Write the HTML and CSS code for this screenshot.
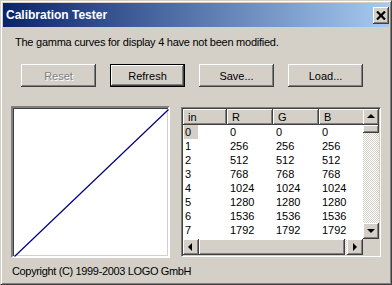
FILE: index.html
```
<!doctype html>
<html lang="en">
<head>
	<meta charset="UTF-8">
	<title>Calibration Tester</title>
	<link rel="stylesheet" href="styles.css">
</head>
<body>
	<div class="window">
		<div class="titlebar">
			<span class="title">Calibration Tester</span>
			<span class="close">
				<svg width="10" height="9" viewBox="0 0 10 9"><path d="M1 0.5 L9 8.5 M9 0.5 L1 8.5" stroke="#000" stroke-width="2.2"/></svg>
			</span>
		</div>
		<div class="content">
			<p class="msg">The gamma curves for display 4 have not been modified.</p>
			<div class="buttons">
				<button class="btn" disabled>Reset</button>
				<button class="btn btn_default">Refresh</button>
				<button class="btn">Save...</button>
				<button class="btn">Load...</button>
			</div>
			<div class="main">
				<div class="graph">
					<svg width="155" height="148" viewBox="0 0 155 148"><line x1="0.5" y1="147.5" x2="154.5" y2="0.5" stroke="#000080" stroke-width="1.2"/></svg>
				</div>
				<div class="grid">
					<div class="cells">
						<table>
							<colgroup><col class="c_in"><col class="c_val"><col class="c_val"><col class="c_val"></colgroup>
							<thead>
								<tr><th>in</th><th>R</th><th>G</th><th>B</th></tr>
							</thead>
							<tbody>
								<tr><td><span class="focus">0</span></td><td>0</td><td>0</td><td>0</td></tr>
								<tr><td>1</td><td>256</td><td>256</td><td>256</td></tr>
								<tr><td>2</td><td>512</td><td>512</td><td>512</td></tr>
								<tr><td>3</td><td>768</td><td>768</td><td>768</td></tr>
								<tr><td>4</td><td>1024</td><td>1024</td><td>1024</td></tr>
								<tr><td>5</td><td>1280</td><td>1280</td><td>1280</td></tr>
								<tr><td>6</td><td>1536</td><td>1536</td><td>1536</td></tr>
								<tr><td>7</td><td>1792</td><td>1792</td><td>1792</td></tr>
							</tbody>
						</table>
					</div>
					<div class="vscroll">
						<div class="sbtn arrow_up"></div>
						<div class="thumb v_thumb"></div>
						<div class="track"></div>
						<div class="sbtn arrow_down"></div>
					</div>
					<div class="hscroll">
						<div class="sbtn arrow_left"></div>
						<div class="thumb h_thumb"></div>
						<div class="track"></div>
						<div class="sbtn arrow_right"></div>
					</div>
					<div class="corner"></div>
				</div>
			</div>
			<p class="copyright">Copyright (C) 1999-2003 LOGO GmbH</p>
		</div>
	</div>
</body>
</html>
```

FILE: styles.css
```
*{
	box-sizing: border-box;
}
body, p, table{
	margin: 0;
	padding: 0;
}
body{
	background-color: #d4d0c8;
	font-family: 'Liberation Sans', Arial, sans-serif;
	font-size: 11px;
	color: #000;
}
.window{
	width: 392px;
	height: 285px;
	border: 1px solid;
	border-color: #d4d0c8 #404040 #404040 #d4d0c8;
	box-shadow: inset 1px 1px #fff, inset -1px -1px #808080;
	padding: 2px;
	background-color: #d4d0c8;
}
.titlebar{
	height: 24px;
	background: linear-gradient(to right, #0a246a, #a6caf0);
	display: flex;
	align-items: center;
	justify-content: space-between;
	padding: 0 0 0 3px;
}
.title{
	color: #fff;
	font-weight: bold;
	font-size: 12px;
}
.close{
	width: 16px;
	height: 17px;
	background-color: #d4d0c8;
	box-shadow: inset -1px -1px #404040, inset 1px 1px #fff, inset -2px -2px #808080;
	display: flex;
	align-items: center;
	justify-content: center;
}
.content{
	padding: 9px 0 0 0;
}
.msg{
	padding-left: 12px;
	line-height: 13px;
	letter-spacing: -0.25px;
}
.buttons{
	display: flex;
	gap: 14px;
	margin-top: 15px;
	padding-left: 18px;
}
.btn{
	width: 75px;
	height: 23px;
	border: none;
	background-color: #d4d0c8;
	font-family: 'Liberation Sans', Arial, sans-serif;
	font-size: 11px;
	color: #000;
	padding: 0;
	box-shadow: inset -1px -1px #404040, inset 1px 1px #fff, inset -2px -2px #808080, inset 2px 2px #d4d0c8;
}
.btn:disabled{
	color: #808080;
	text-shadow: 1px 1px #fff;
}
.btn_default{
	border: 1px solid #000;
}
.main{
	display: flex;
	gap: 11px;
	margin-top: 19px;
	padding-left: 8px;
	align-items: flex-start;
}
.graph{
	width: 159px;
	height: 152px;
	background-color: #fff;
	border: 2px solid;
	border-color: #808080 #fff #fff #808080;
	box-shadow: inset 1px 1px #404040, inset -1px -1px #d4d0c8;
	padding: 1px;
}
.graph svg{
	display: block;
}
.grid{
	margin-top: 1px;
	width: 200px;
	height: 150px;
	border: 1px solid;
	border-color: #808080 #fff #fff #808080;
	box-shadow: inset 1px 1px #404040, inset -1px -1px #d4d0c8;
	padding: 1px;
	display: grid;
	grid-template-columns: 180px 16px;
	grid-template-rows: 130px 16px;
	background-color: #fff;
}
.cells{
	overflow: hidden;
	background-color: #fff;
}
table{
	border-collapse: collapse;
	table-layout: fixed;
	width: 180px;
}
.c_in{
	width: 44px;
}
.c_val{
	width: 46px;
}
th{
	height: 16px;
	padding: 0 0 0 5px;
	text-align: left;
	font-weight: normal;
	background-color: #d4d0c8;
	box-shadow: inset -1px -1px #404040, inset 1px 1px #fff, inset -2px -2px #808080;
	line-height: 16px;
}
td{
	height: 14px;
	padding: 0 0 0 3px;
	line-height: 14px;
	white-space: nowrap;
}
td:first-child{
	padding-left: 2px;
}
.focus{
	display: inline-block;
	width: 14px;
	background-color: #d4d0c8;
	margin-left: -1px;
	padding-left: 1px;
}
.vscroll{
	display: flex;
	flex-direction: column;
}
.hscroll{
	display: flex;
}
.track{
	flex: 1;
	background-color: #d4d0c8;
	background-image: conic-gradient(#fff 25%, #d4d0c8 0 50%, #fff 0 75%, #d4d0c8 0);
	background-size: 2px 2px;
}
.sbtn, .thumb{
	flex: none;
	width: 16px;
	height: 16px;
	background-color: #d4d0c8;
	box-shadow: inset -1px -1px #404040, inset 1px 1px #fff, inset -2px -2px #808080;
	position: relative;
}
.v_thumb{
	height: 8px;
}
.h_thumb{
	width: 146px;
}
.sbtn::after{
	content: '';
	position: absolute;
	left: 50%;
	top: 50%;
	width: 0;
	height: 0;
	border: 4px solid transparent;
}
.arrow_up::after{
	border-top-width: 0;
	border-bottom-color: #000;
	margin: -3px 0 0 -4px;
}
.arrow_down::after{
	border-bottom-width: 0;
	border-top-color: #000;
	margin: -2px 0 0 -4px;
}
.arrow_left::after{
	border-left-width: 0;
	border-right-color: #000;
	margin: -4px 0 0 -3px;
}
.arrow_right::after{
	border-right-width: 0;
	border-left-color: #000;
	margin: -4px 0 0 -2px;
}
.corner{
	background-color: #d4d0c8;
}
.copyright{
	margin-top: 7px;
	padding-left: 9px;
	line-height: 13px;
	letter-spacing: -0.35px;
}
```
